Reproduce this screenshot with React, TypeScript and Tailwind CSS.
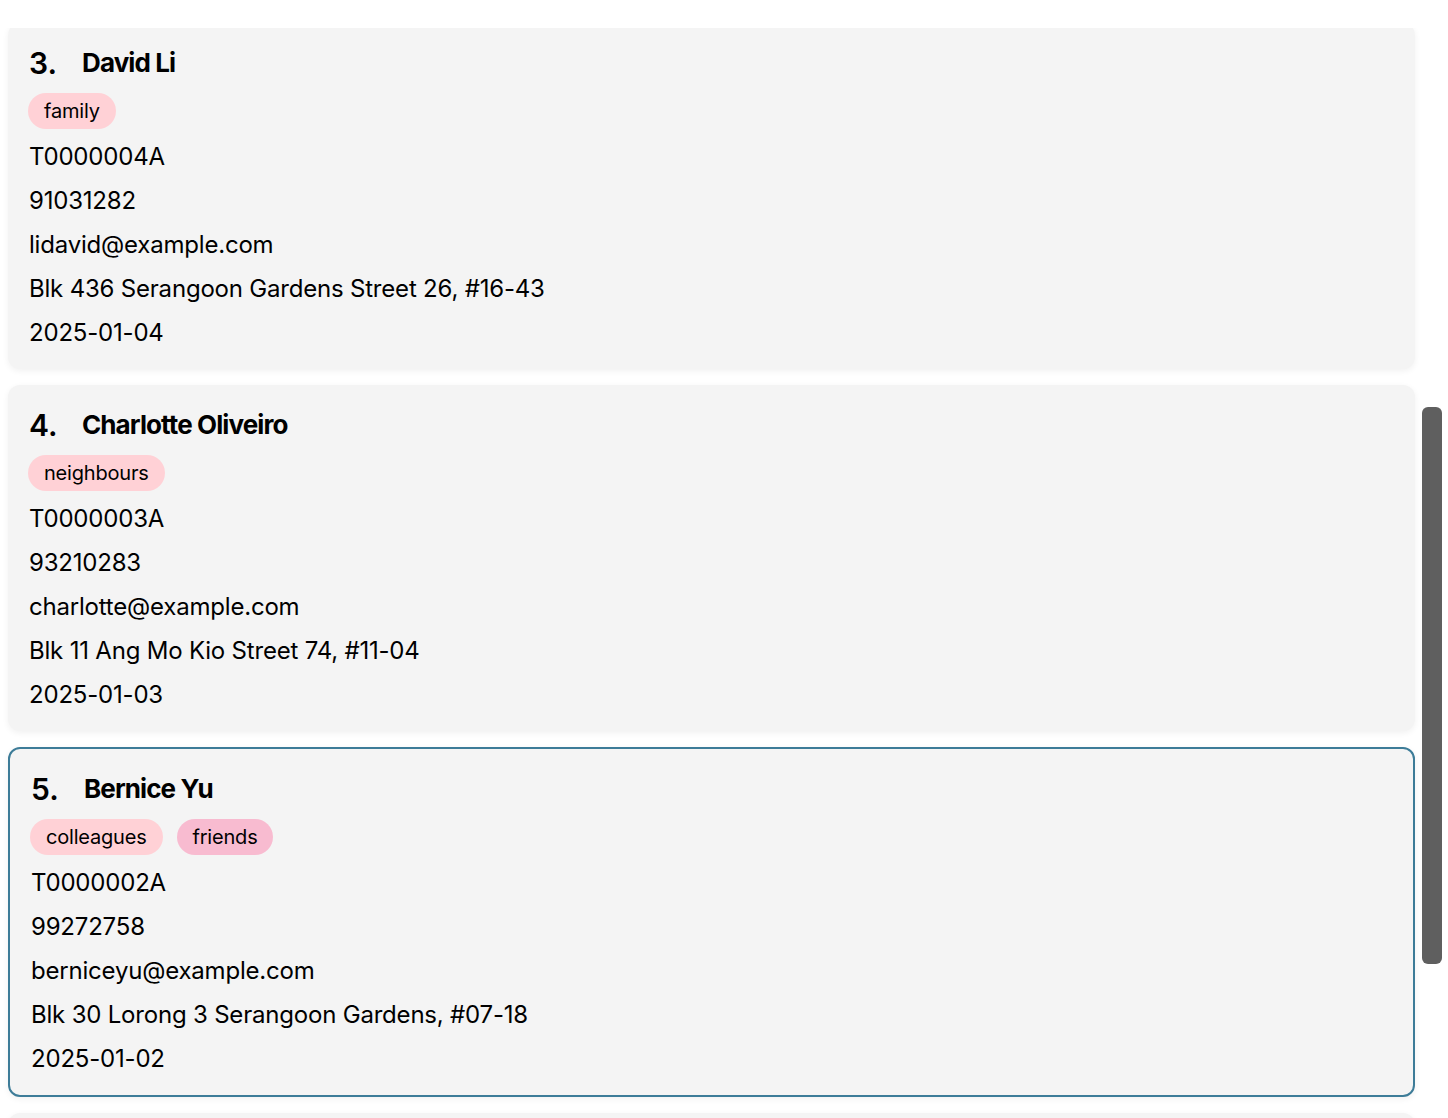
import React from 'react';

type Person = {
  index: number;
  name: string;
  tags: string[];
  nric: string;
  phone: string;
  email: string;
  address: string;
  date: string;
};

const people: Person[] = [
  {
    index: 3,
    name: 'David Li',
    tags: ['family'],
    nric: 'T0000004A',
    phone: '91031282',
    email: 'lidavid@example.com',
    address: 'Blk 436 Serangoon Gardens Street 26, #16-43',
    date: '2025-01-04',
  },
  {
    index: 4,
    name: 'Charlotte Oliveiro',
    tags: ['neighbours'],
    nric: 'T0000003A',
    phone: '93210283',
    email: 'charlotte@example.com',
    address: 'Blk 11 Ang Mo Kio Street 74, #11-04',
    date: '2025-01-03',
  },
  {
    index: 5,
    name: 'Bernice Yu',
    tags: ['colleagues', 'friends'],
    nric: 'T0000002A',
    phone: '99272758',
    email: 'berniceyu@example.com',
    address: 'Blk 30 Lorong 3 Serangoon Gardens, #07-18',
    date: '2025-01-02',
  },
];

function Tag({ label }: { label: string }) {
  const bg = label === 'friends' ? 'bg-[#f8bbd0]' : 'bg-[#ffd1d6]';
  return (
    <span className={`${bg} rounded-full px-4 h-9 flex items-center text-[20px] tracking-[-0.2px] text-black`}>
      {label}
    </span>
  );
}

function PersonCard({ person, selected }: { person: Person; selected?: boolean }) {
  const line = 'text-[24px] leading-9 tracking-[-0.2px]';
  return (
    <div
      className={`bg-[#f4f4f4] rounded-xl shadow-[0_2px_6px_rgba(0,0,0,0.06)] ${
        selected ? 'border-2 border-[#3d7c98]' : ''
      }`}
    >
      <div className="flex flex-col px-[21px] pt-[21px] pb-[18px]">
        <div className="flex items-center h-[38px]">
          <span className="text-[30px] font-semibold w-[53px] leading-none">{person.index}.</span>
          <span className="text-[26px] font-bold tracking-[-0.9px] leading-none">{person.name}</span>
        </div>
        <div className="flex gap-3.5 mt-[11px] -ml-px">
          {person.tags.map((t) => (
            <Tag key={t} label={t} />
          ))}
        </div>
        <div className="flex flex-col gap-2 mt-[10px]">
          <div className={line}>{person.nric}</div>
          <div className={line}>{person.phone}</div>
          <div className={line}>{person.email}</div>
          <div className={line}>{person.address}</div>
          <div className={line}>{person.date}</div>
        </div>
      </div>
    </div>
  );
}

export default function App() {
  return (
    <div
      className="relative h-[1118px] w-[1448px] overflow-hidden bg-white text-black"
      style={{ fontFamily: 'Inter, "Noto Sans", sans-serif' }}
    >
      {/* list viewport, scrolled a few pixels into card 3 */}
      <div className="mt-[28px] h-[1090px] overflow-hidden">
        <div className="flex flex-col gap-4 pl-2 pr-[33px] -mt-[5px]">
          {people.map((p) => (
            <PersonCard key={p.index} person={p} selected={p.index === 5} />
          ))}
          {/* top edge of the next card, rest is below the fold */}
          <div className="h-[346px] bg-[#f4f4f4] rounded-xl shadow-[0_2px_6px_rgba(0,0,0,0.06)]" />
        </div>
      </div>
      {/* scrollbar thumb */}
      <div className="absolute left-[1422px] top-[407px] w-5 h-[557px] rounded-md bg-[#5f5f5f]" />
    </div>
  );
}
